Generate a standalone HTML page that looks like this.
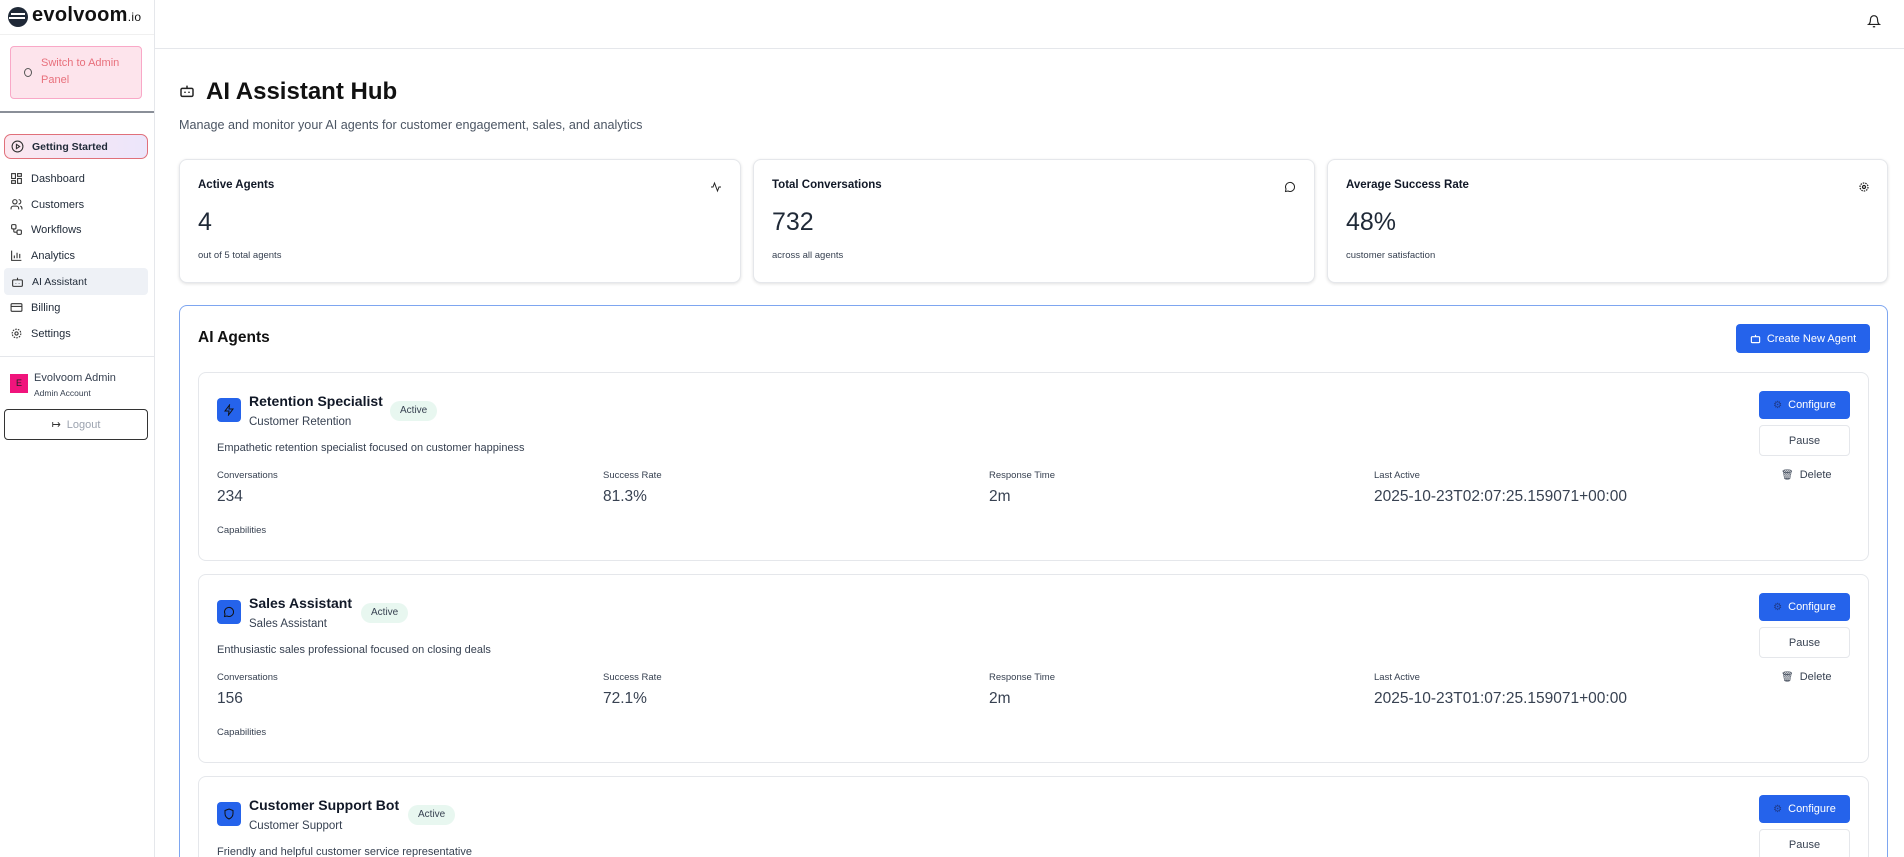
<!DOCTYPE html>
<html style="width:1904px;height:857px;overflow:hidden"><head><meta charset="utf-8"><style>
*{box-sizing:border-box;margin:0;padding:0}
body{width:1904px;height:857px;overflow:hidden;background:#fff;font-family:"Liberation Sans",sans-serif;color:#111827;position:relative}
.a{position:absolute;white-space:nowrap}
.side{left:0;top:0;width:155px;height:857px;border-right:1px solid #e5e7eb;background:#fff}
.nav{position:absolute;left:10px;font-size:11px;color:#1f2937;display:flex;align-items:center;gap:8px;white-space:nowrap}
.nav svg{width:13px;height:13px}
.card{position:absolute;border:1px solid #e5e7eb;border-radius:8px;background:#fff;box-shadow:0 1px 3px rgba(0,0,0,.12)}
.lbl{font-size:11.5px;font-weight:bold;color:#111827}
.big{font-size:25px;color:#1f2937}
.sm{font-size:9.5px;color:#374151}
.agent{position:absolute;left:198px;width:1671px;height:189px;border:1px solid #e5e7eb;border-radius:8px;background:#fff}
.agent *{white-space:nowrap}
.ic{position:absolute;left:18px;top:25px;width:24px;height:24px;background:#2563eb;border-radius:4px;display:flex;align-items:center;justify-content:center}
.nm{position:absolute;left:50px;top:20px;font-size:14px;font-weight:bold;color:#111827}
.badge{position:absolute;top:28px;height:20px;padding:0 10px;border-radius:10px;background:#e8f7f0;font-size:10px;color:#374151;line-height:20px}
.sub{position:absolute;left:50px;top:43px;font-size:11.5px;color:#374151}
.desc{position:absolute;left:18px;top:69px;font-size:11px;color:#374151}
.sl{position:absolute;top:97px;font-size:9.5px;color:#374151}
.sv{position:absolute;top:115px;font-size:15.5px;color:#374151}
.cap{position:absolute;left:18px;top:152px;font-size:9.5px;color:#374151}
.cfg{position:absolute;left:1560px;top:18px;width:91px;height:28px;background:#2563eb;border-radius:4px;color:#fff;font-size:11px;display:flex;align-items:center;justify-content:center;gap:6px}
.pause{position:absolute;left:1560px;top:52px;width:91px;height:31px;border:1px solid #e5e7eb;border-radius:4px;font-size:11px;color:#374151;display:flex;align-items:center;justify-content:center}
.del{position:absolute;left:1582px;top:96px;font-size:11px;color:#374151;display:flex;align-items:center;gap:6px}
#clip{position:absolute;left:0;top:0;width:1904px;height:857px;overflow:hidden}
</style></head><body><div id="clip">
<div class="a side"></div>
<div class="a" style="left:8px;top:7px;width:20px;height:20px;border-radius:50%;background:#1f2937"></div>
<div class="a" style="left:11px;top:13px;width:14px;height:2px;background:#fff"></div>
<div class="a" style="left:9px;top:17px;width:16px;height:2px;background:#fff"></div>
<div class="a" style="left:32px;top:4px;font-size:20px;font-weight:bold;color:#111;letter-spacing:.3px">evolvoom<span style="font-size:12px;font-weight:normal">.io</span></div>
<div class="a" style="left:0;top:34px;width:154px;height:1px;background:#f0f0f0"></div>
<div class="a" style="left:10px;top:46px;width:132px;height:53px;background:#fde4ec;border:1px solid #f9a8c7;border-radius:4px"></div>
<div class="a" style="left:24px;top:68px;width:8px;height:9px;border:1.5px solid #555;border-radius:50%"></div>
<div class="a" style="left:41px;top:55px;font-size:11px;color:#e8707c;line-height:17px">Switch to Admin<br>Panel</div>
<div class="a" style="left:0;top:111px;width:154px;height:2px;background:#8a8f98"></div>
<div class="a" style="left:4px;top:134px;width:144px;height:25px;border:1.5px solid #e0707a;border-radius:7px;background:linear-gradient(90deg,#fce7ef,#ece6fb)"></div>
<div class="nav" style="top:140px;left:11px;font-weight:bold;font-size:10.5px"><svg viewBox="0 0 24 24" fill="none" stroke="#333" stroke-width="2"><circle cx="12" cy="12" r="10"/><path d="M10 8l6 4-6 4z"/></svg>Getting Started</div>
<div class="nav" style="top:172px"><svg viewBox="0 0 24 24" fill="none" stroke="#333" stroke-width="2"><rect x="3" y="3" width="7" height="9"/><rect x="14" y="3" width="7" height="5"/><rect x="14" y="12" width="7" height="9"/><rect x="3" y="16" width="7" height="5"/></svg>Dashboard</div>
<div class="nav" style="top:198px"><svg viewBox="0 0 24 24" fill="none" stroke="#333" stroke-width="2"><circle cx="9" cy="7" r="4"/><path d="M2 21v-2a4 4 0 014-4h6a4 4 0 014 4v2M16 3a4 4 0 010 8M22 21v-2a4 4 0 00-3-4"/></svg>Customers</div>
<div class="nav" style="top:223px"><svg viewBox="0 0 24 24" fill="none" stroke="#333" stroke-width="2"><rect x="3" y="3" width="8" height="8" rx="2"/><rect x="13" y="13" width="8" height="8" rx="2"/><path d="M7 11v4a2 2 0 002 2h4"/></svg>Workflows</div>
<div class="nav" style="top:249px"><svg viewBox="0 0 24 24" fill="none" stroke="#333" stroke-width="2"><path d="M3 3v18h18M8 17v-5M13 17V7M18 17v-8"/></svg>Analytics</div>
<div class="a" style="left:4px;top:268px;width:144px;height:27px;background:#eef1f6;border-radius:4px"></div>
<div class="nav" style="top:275px;left:11px;font-size:10.5px"><svg viewBox="0 0 24 24" fill="none" stroke="#333" stroke-width="2"><rect x="3" y="9" width="18" height="12" rx="2"/><path d="M12 9V5M9 15v1M15 15v1"/></svg>AI Assistant</div>
<div class="nav" style="top:301px"><svg viewBox="0 0 24 24" fill="none" stroke="#333" stroke-width="2"><rect x="2" y="5" width="20" height="14" rx="2"/><path d="M2 10h20"/></svg>Billing</div>
<div class="nav" style="top:327px"><svg viewBox="0 0 24 24" fill="none" stroke="#333" stroke-width="2"><circle cx="12" cy="12" r="3"/><circle cx="12" cy="12" r="8" stroke-dasharray="3 2"/></svg>Settings</div>
<div class="a" style="left:0;top:356px;width:154px;height:1px;background:#e5e7eb"></div>
<div class="a" style="left:10px;top:374px;width:18px;height:19px;background:#f0147c;color:#222;font-size:9px;text-align:center;line-height:19px">E</div>
<div class="a" style="left:34px;top:372px;font-size:11px;color:#374151">Evolvoom Admin</div>
<div class="a" style="left:34px;top:388px;font-size:8.5px;color:#374151">Admin Account</div>
<div class="a" style="left:4px;top:409px;width:144px;height:31px;border:1.5px solid #333;border-radius:4px;font-size:11px;color:#9ca3af;display:flex;align-items:center;justify-content:center;gap:6px"><span style="color:#333">↦</span>Logout</div>

<div class="a" style="left:155px;top:48px;width:1749px;height:1px;background:#e5e7eb"></div>
<svg class="a" style="left:1867px;top:14px" width="14" height="15" viewBox="0 0 24 24" fill="none" stroke="#222" stroke-width="2"><path d="M6 8a6 6 0 0112 0c0 7 3 9 3 9H3s3-2 3-9M10 21h4"/></svg>

<svg class="a" style="left:179px;top:83px" width="16" height="16" viewBox="0 0 24 24" fill="none" stroke="#222" stroke-width="2.2"><rect x="3" y="8" width="18" height="12" rx="2"/><path d="M12 8V4M9 13v2M15 13v2"/></svg>
<div class="a" style="left:206px;top:78px;font-size:24px;font-weight:bold;color:#111">AI Assistant Hub</div>
<div class="a" style="left:179px;top:118px;font-size:12.6px;color:#4b5563">Manage and monitor your AI agents for customer engagement, sales, and analytics</div>

<div class="card" style="left:179px;top:159px;width:562px;height:124px"></div>
<div class="card" style="left:753px;top:159px;width:562px;height:124px"></div>
<div class="card" style="left:1327px;top:159px;width:561px;height:124px"></div>
<div class="a lbl" style="left:198px;top:179px">Active Agents</div>
<div class="a big" style="left:198px;top:208px">4</div>
<div class="a sm" style="left:198px;top:250px">out of 5 total agents</div>
<div class="a lbl" style="left:772px;top:179px">Total Conversations</div>
<div class="a big" style="left:772px;top:208px">732</div>
<div class="a sm" style="left:772px;top:250px">across all agents</div>
<div class="a lbl" style="left:1346px;top:179px">Average Success Rate</div>
<div class="a big" style="left:1346px;top:208px">48%</div>
<div class="a sm" style="left:1346px;top:250px">customer satisfaction</div>
<svg class="a" style="left:710px;top:181px" width="12" height="12" viewBox="0 0 24 24" fill="none" stroke="#222" stroke-width="2"><path d="M2 12h4l3-8 6 16 3-8h4"/></svg>
<svg class="a" style="left:1284px;top:181px" width="12" height="12" viewBox="0 0 24 24" fill="none" stroke="#222" stroke-width="2"><path d="M21 12a9 9 0 01-13 8l-5 1 1-5a9 9 0 1117-4z"/></svg>
<svg class="a" style="left:1858px;top:181px" width="12" height="12" viewBox="0 0 24 24" fill="none" stroke="#222" stroke-width="2.5"><circle cx="12" cy="12" r="3"/><circle cx="12" cy="12" r="8" stroke-dasharray="3 2"/></svg>

<div class="a" style="left:179px;top:305px;width:1709px;height:552px;border:1.5px solid #7ea6f0;border-bottom:none;border-radius:8px 8px 0 0"></div>
<div class="a" style="left:198px;top:329px;font-size:15.5px;font-weight:bold;color:#111">AI Agents</div>
<div class="a" style="left:1736px;top:324px;width:134px;height:29px;background:#2563eb;border-radius:4px;color:#fff;font-size:11px;display:flex;align-items:center;justify-content:center;gap:6px"><svg width="11" height="11" viewBox="0 0 24 24" fill="none" stroke="#fff" stroke-width="2.5"><rect x="3" y="8" width="18" height="13" rx="2"/><path d="M12 8V4"/></svg>Create New Agent</div>

<div class="agent" style="top:372px">
 <div class="ic"><svg width="12" height="12" viewBox="0 0 24 24" fill="none" stroke="#111" stroke-width="2"><path d="M13 2L4 14h8l-1 8 9-12h-8z"/></svg></div>
 <div class="nm">Retention Specialist</div><div class="sub">Customer Retention</div>
 <div class="badge" style="left:191px">Active</div>
 <div class="desc">Empathetic retention specialist focused on customer happiness</div>
 <div class="sl" style="left:18px">Conversations</div><div class="sv" style="left:18px">234</div>
 <div class="sl" style="left:404px">Success Rate</div><div class="sv" style="left:404px">81.3%</div>
 <div class="sl" style="left:790px">Response Time</div><div class="sv" style="left:790px">2m</div>
 <div class="sl" style="left:1175px">Last Active</div><div class="sv" style="left:1175px">2025-10-23T02:07:25.159071+00:00</div>
 <div class="cap">Capabilities</div>
 <div class="cfg"><span style="font-size:10px;color:#1e3a8a">⚙</span>Configure</div>
 <div class="pause">Pause</div>
 <div class="del"><span style="font-size:10px">🗑</span>Delete</div>
</div>
<div class="agent" style="top:574px">
 <div class="ic"><svg width="12" height="12" viewBox="0 0 24 24" fill="none" stroke="#111" stroke-width="2"><path d="M21 12a9 9 0 01-13 8l-5 1 1-5a9 9 0 1117-4z"/></svg></div>
 <div class="nm">Sales Assistant</div><div class="sub">Sales Assistant</div>
 <div class="badge" style="left:162px">Active</div>
 <div class="desc">Enthusiastic sales professional focused on closing deals</div>
 <div class="sl" style="left:18px">Conversations</div><div class="sv" style="left:18px">156</div>
 <div class="sl" style="left:404px">Success Rate</div><div class="sv" style="left:404px">72.1%</div>
 <div class="sl" style="left:790px">Response Time</div><div class="sv" style="left:790px">2m</div>
 <div class="sl" style="left:1175px">Last Active</div><div class="sv" style="left:1175px">2025-10-23T01:07:25.159071+00:00</div>
 <div class="cap">Capabilities</div>
 <div class="cfg"><span style="font-size:10px;color:#1e3a8a">⚙</span>Configure</div>
 <div class="pause">Pause</div>
 <div class="del"><span style="font-size:10px">🗑</span>Delete</div>
</div>
<div class="agent" style="top:776px;height:81px;border-bottom:none;border-radius:8px 8px 0 0">
 <div class="ic"><svg width="12" height="12" viewBox="0 0 24 24" fill="none" stroke="#111" stroke-width="2"><path d="M12 2l8 3v6c0 5-3.5 9-8 11-4.5-2-8-6-8-11V5z"/></svg></div>
 <div class="nm">Customer Support Bot</div><div class="sub">Customer Support</div>
 <div class="badge" style="left:209px">Active</div>
 <div class="desc">Friendly and helpful customer service representative</div>
 <div class="cfg"><span style="font-size:10px;color:#1e3a8a">⚙</span>Configure</div>
 <div class="pause">Pause</div>
</div>
</div></body></html>
